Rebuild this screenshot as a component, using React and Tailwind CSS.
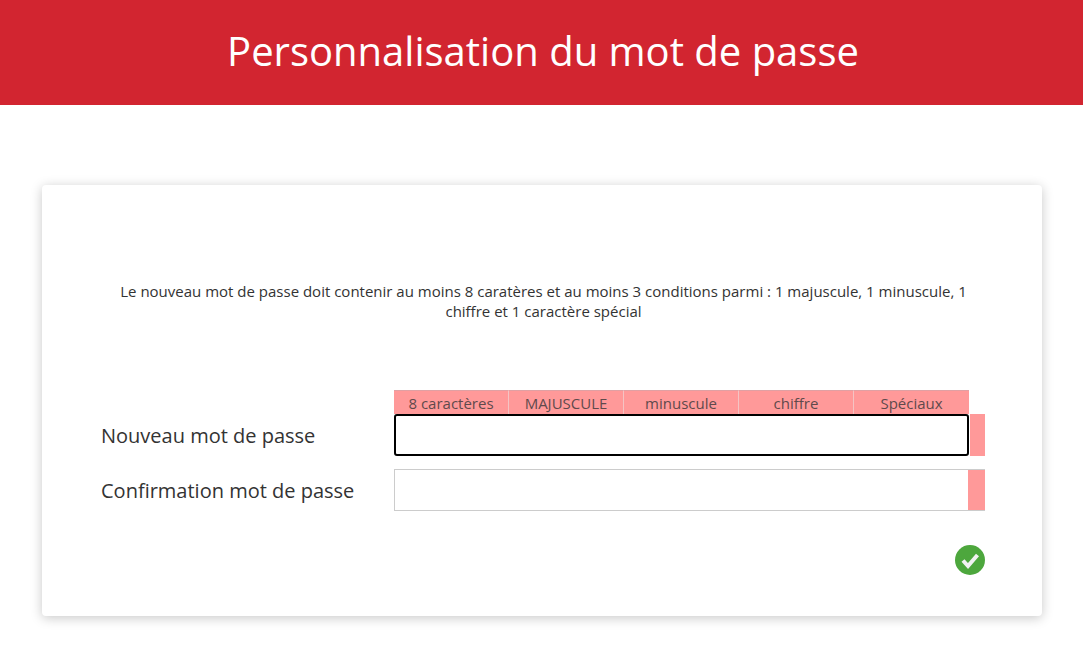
const conditions = ["8 caractères", "MAJUSCULE", "minuscule", "chiffre", "Spéciaux"];

function CheckBadge() {
  return (
    <svg width="30" height="30" viewBox="0 0 30 30">
      <circle cx="15" cy="15" r="15" fill="#4da73d" />
      <path d="M8 15.5l5 5.5 9.5-11" fill="none" stroke="#f2f2f2" strokeWidth="4" />
    </svg>
  );
}

export default function App() {
  return (
    <div className="min-h-[655px] bg-white text-[#333] font-['Open_Sans',sans-serif]">
      {/* Header */}
      <header className="h-[105px] bg-[#d22530] flex items-center justify-center pb-[4px] pl-[3px]">
        <h1 className="text-white text-[40px] leading-none">Personnalisation du mot de passe</h1>
      </header>

      {/* Card */}
      <div className="ml-[42px] mt-[80px] h-[431px] w-[1000px] bg-white rounded-[4px] shadow-[0_2px_12px_rgba(0,0,0,0.22)] pt-[96px] pl-[59px] pr-[57px]">
        <p className="text-center text-[15px] leading-[20px] pl-[17px] pr-[16px]">
          Le nouveau mot de passe doit contenir au moins 8 caratères et au moins 3 conditions parmi : 1 majuscule, 1 minuscule, 1 chiffre et 1 caractère spécial
        </p>

        <div className="mt-[69px]">
          <div className="ml-[293px] grid grid-cols-[114px_115px_115px_115px_116px] h-[24px] w-[575px] bg-[#ff9999]">
            {conditions.map((c, i) => (
              <div
                key={c}
                className={`text-center text-[15px] leading-[25px] text-[#5f4a4c] border-t border-[#e0a0a3] ${i > 0 ? "border-l border-l-[#f4c4c4]" : ""}`}
              >
                {c}
              </div>
            ))}
          </div>

          <div className="flex items-center h-[42px]">
            <label className="w-[293px] shrink-0 pt-[2px] text-[20px] text-[#333]">Nouveau mot de passe</label>
            <div className="flex h-[42px] w-[591px]">
              <input className="w-[575px] h-[42px] rounded-[3px] border-2 border-black outline-none bg-white" />
              <div className="w-[15px] ml-[1px] bg-[#ff9999]" />
            </div>
          </div>

          <div className="flex items-center h-[42px] mt-[13px]">
            <label className="w-[293px] shrink-0 pt-[2px] text-[20px] text-[#333]">Confirmation mot de passe</label>
            <div className="flex h-[42px] w-[591px]">
              <input className="w-[574px] h-[42px] border border-[#ccc] border-r-0 outline-none bg-white" />
              <div className="w-[17px] bg-[#ff9999] border-y border-[#ccc]" />
            </div>
          </div>

          <div className="flex justify-end mt-[34px]">
            <CheckBadge />
          </div>
        </div>
      </div>
    </div>
  );
}
